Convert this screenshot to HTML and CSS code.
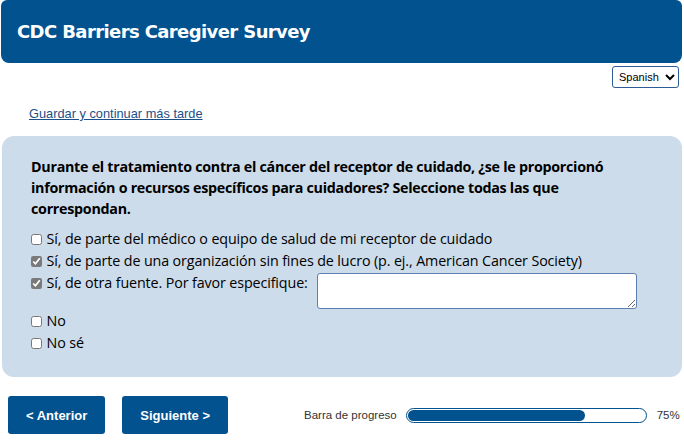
FILE: index.html
```html
<!DOCTYPE html>
<html lang="es">
<head>
<meta charset="UTF-8">
<meta name="viewport" content="width=device-width, initial-scale=1.0">
<title>CDC Barriers Caregiver Survey</title>
<link rel="stylesheet" href="styles.css">
</head>
<body>
<div class="header">
    <h1>CDC Barriers Caregiver Survey</h1>
</div>
<div class="lang">
    <select>
        <option>Spanish</option>
        <option>English</option>
    </select>
</div>
<div class="save">
    <a href="#">Guardar y continuar más tarde</a>
</div>
<div class="panel">
    <p class="question">Durante el tratamiento contra el cáncer del receptor de cuidado, ¿se le proporcionó información o recursos específicos para cuidadores? Seleccione todas las que correspondan.</p>
    <ul class="options">
        <li><label><input type="checkbox"> Sí, de parte del médico o equipo de salud de mi receptor de cuidado</label></li>
        <li><label><input type="checkbox" checked> Sí, de parte de una organización sin fines de lucro (p. ej., American Cancer Society)</label></li>
        <li class="other">
            <label><input type="checkbox" checked> Sí, de otra fuente. Por favor especifique:</label>
            <textarea></textarea>
        </li>
        <li><label><input type="checkbox"> No</label></li>
        <li><label><input type="checkbox"> No sé</label></li>
    </ul>
</div>
<div class="footer">
    <button class="btn">&lt; Anterior</button>
    <button class="btn">Siguiente &gt;</button>
    <div class="progress">
        <span class="label">Barra de progreso</span>
        <div class="bar"><div class="fill" style="width: 75%"></div></div>
        <span class="pct">75%</span>
    </div>
</div>
</body>
</html>
```

FILE: styles.css
```css
*{margin: 0; padding: 0; box-sizing: border-box;}
body{
    padding: 0 2px 0 1px;
    font-family: "Open Sans", "Liberation Sans", sans-serif;
    color: #000;
    background: #fff;
}
.header{
    height: 63px;
    background: #02528f;
    border-radius: 6px 6px 8px 8px;
    padding: 0 16px;
    display: flex;
    align-items: center;
}
.header h1{
    color: #fff;
    font-family: "DejaVu Sans", sans-serif;
    font-size: 18px;
    font-weight: bold;
    letter-spacing: -0.6px;
}
.lang{
    display: flex;
    justify-content: flex-end;
    padding: 3px 3px 0 0;
}
.lang select{
    width: 67px;
    height: 22px;
    font-family: "Liberation Sans", sans-serif;
    font-size: 11px;
    border: 1px solid #2c5b96;
    border-radius: 3px;
    background: #fff;
    padding-left: 2px;
}
.save{
    padding: 13px 0 0 28px;
    height: 48px;
}
.save a{
    font-family: "Liberation Sans", sans-serif;
    font-size: 12.8px;
    color: #1d4f87;
}
.panel{
    background: #cddcea;
    border-radius: 12px;
    margin: 0 0 0 1px;
    height: 241px;
    padding: 20px 28px 0 29px;
}
.question{
    font-size: 14.3px;
    font-weight: bold;
    line-height: 21px;
    letter-spacing: -0.28px;
    margin-bottom: 9px;
}
.options{
    list-style: none;
    font-size: 14.3px;
    letter-spacing: -0.12px;
}
.options li{
    line-height: 22px;
}
.options input{
    width: 11px;
    height: 11px;
    margin: 0 1px 0 0;
    vertical-align: -1px;
    accent-color: #7a7a7a;
}
.options .other{
    display: flex;
    align-items: flex-start;
    margin-bottom: 1px;
}
.options textarea{
    width: 320px;
    height: 36px;
    margin: 1px 0 0 9px;
    border: 1px solid #5e7fae;
    border-radius: 3px;
    resize: vertical;
}
.footer{
    display: flex;
    align-items: center;
    padding: 19px 0 0 7px;
}
.btn{
    height: 38px;
    background: #02528f;
    color: #fff;
    border: none;
    border-radius: 3px;
    font-family: "Liberation Sans", sans-serif;
    font-size: 13px;
    font-weight: bold;
    padding: 0 18px;
    margin-right: 17px;
}
.progress{
    display: flex;
    align-items: center;
    margin-left: 59px;
    font-family: "Liberation Sans", sans-serif;
    font-size: 11.5px;
    color: #333;
}
.bar{
    width: 241px;
    height: 15px;
    border: 1px solid #02528f;
    border-radius: 8px;
    margin: 0 10px 0 9px;
    padding: 1px;
}
.fill{
    height: 100%;
    background: #02528f;
    border-radius: 6px;
}
```
